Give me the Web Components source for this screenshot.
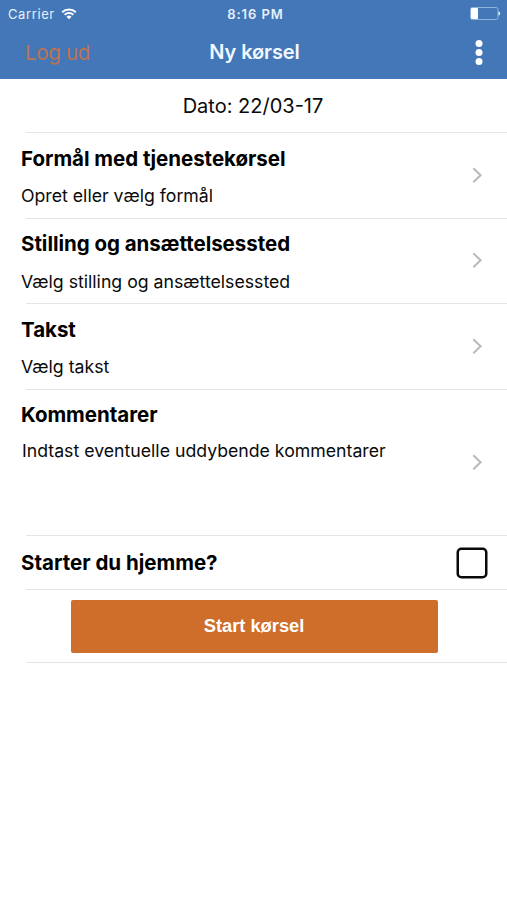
<!DOCTYPE html>
<html lang="da">
<head>
<meta charset="utf-8">
<meta name="viewport" content="width=device-width, initial-scale=1">
<title>Ny kørsel</title>
<style>
  html, body {
    margin: 0;
    background: #fff;
  }

  body {
    min-height: 900px;
    font-family: Inter, "Liberation Sans", sans-serif;
    color: #0a0a0a;
  }
</style>
</head>
<body>
<driving-screen></driving-screen>

<script>
/**
 * StatusBar - carrier, clock and battery
 */
class StatusBar extends HTMLElement {
  constructor() {
    super();
    this.attachShadow({ mode: 'open' });
    this.shadowRoot.innerHTML = `
      <style>
        :host {
          display: grid;
          grid-template-columns: 1fr auto 1fr;
          align-items: center;
          height: 27px;
          padding: 0 6px 0 8px;
          font-size: 13px;
          color: #e6f0fb;
        }

        svg { display: block; }

        .carrier {
          display: flex;
          align-items: center;
          gap: 6px;
          letter-spacing: 0.6px;
        }

        .time {
          padding-left: 2px;
          font-weight: 600;
          letter-spacing: 0.95px;
        }

        .battery { justify-self: end; }
      </style>
      <div class="carrier">
        <span>${this.getAttribute('carrier')}</span>
        <svg width="16" height="12" viewBox="0 0 16 12" fill="none" stroke="#fff" stroke-width="2">
          <path d="M1.2 4.2a9.7 9.7 0 0 1 13.6 0M3.7 6.8a6.2 6.2 0 0 1 8.6 0"/>
          <path d="M8 11.2 5.5 8.7a3.6 3.6 0 0 1 5 0z" fill="#fff" stroke="none"/>
        </svg>
      </div>
      <div class="time">${this.getAttribute('time')}</div>
      <svg class="battery" width="31" height="13" viewBox="0 0 31 13">
        <rect x="0.5" y="0.5" width="27.5" height="12" rx="1.8" fill="none" stroke="#8fb4dd"/>
        <rect x="1" y="1" width="7" height="11" rx="0.8" fill="#fff"/>
        <path d="M28.5 4.5c2 .5 2 3.5 0 4z" fill="#fff"/>
      </svg>
    `;
  }
}

/**
 * NavBar - back action, title and overflow menu
 */
class NavBar extends HTMLElement {
  constructor() {
    super();
    this.attachShadow({ mode: 'open' });
    this.shadowRoot.innerHTML = `
      <style>
        :host {
          display: grid;
          grid-template-columns: 1fr auto 1fr;
          align-items: center;
          height: 50px;
          padding: 0 23px 0 25px;
        }

        .action {
          font-size: 20.5px;
          letter-spacing: -0.3px;
          color: #bd7350;
        }

        .title {
          font-size: 20px;
          font-weight: 600;
          letter-spacing: -0.1px;
          color: #f2f8ff;
        }

        svg {
          display: block;
          justify-self: end;
        }
      </style>
      <div class="action"><slot name="action"></slot></div>
      <div class="title"><slot></slot></div>
      <svg width="10" height="27" viewBox="0 0 10 27" fill="#fff">
        <circle cx="5" cy="4.4" r="3.5"/>
        <circle cx="5" cy="13.5" r="3.5"/>
        <circle cx="5" cy="22.6" r="3.5"/>
      </svg>
    `;
  }
}

/**
 * FormRow - one table cell with an inset separator under it
 */
class FormRow extends HTMLElement {
  constructor() {
    super();
    this.attachShadow({ mode: 'open' });
    this.shadowRoot.innerHTML = `
      <style>
        :host {
          display: flex;
          flex-direction: column;
          height: var(--row-height, 86px);
        }

        .content {
          flex: 1;
          display: flex;
          align-items: center;
          justify-content: var(--row-justify, space-between);
          padding: 0 19px 0 21px;
        }

        .separator {
          height: 1px;
          margin-left: 26px;
          background: #e4e4e6;
        }
      </style>
      <div class="content"><slot></slot></div>
      <div class="separator"></div>
    `;
  }
}

/**
 * ChoiceRow - heading, current value and a disclosure chevron
 */
class ChoiceRow extends HTMLElement {
  constructor() {
    super();
    this.attachShadow({ mode: 'open' });
    this.shadowRoot.innerHTML = `
      <style>
        :host {
          flex: 1;
          align-self: stretch;
          display: flex;
          align-items: center;
          justify-content: space-between;
          padding-right: 5px;
        }

        .text {
          align-self: flex-start;
          padding-top: var(--heading-top, 12px);
        }

        .heading {
          font-size: 20.5px;
          line-height: 28px;
          font-weight: 700;
          letter-spacing: -0.03px;
          color: #000;
        }

        .value {
          margin-top: var(--value-gap, 11px);
          padding-left: var(--value-indent, 0);
          font-size: 17.7px;
          line-height: 24px;
        }

        svg { display: block; }
      </style>
      <div class="text">
        <div class="heading">${this.getAttribute('heading')}</div>
        <div class="value"><slot></slot></div>
      </div>
      <svg width="11" height="17" viewBox="0 0 11 17" fill="none" stroke="#b9b9bb" stroke-width="2">
        <path d="M1.3 1.3 8.6 8.3 1.3 15.3"/>
      </svg>
    `;
  }
}

/**
 * CheckBox - plain rounded box, ticked when checked is set
 */
class CheckBox extends HTMLElement {
  constructor() {
    super();
    this.attachShadow({ mode: 'open' });
    this.shadowRoot.innerHTML = `
      <style>
        :host { display: block; }

        svg { display: block; }
        .tick { display: none; }
        :host([checked]) .tick { display: inline; }
      </style>
      <svg width="32" height="32" viewBox="0 0 32 32" fill="none" stroke="#0a0a0a" stroke-width="2.5">
        <rect x="1.75" y="1.75" width="28.5" height="28.5" rx="3.5"/>
        <path class="tick" d="M8 16l6 6L24 10"/>
      </svg>
    `;
    this.addEventListener('click', () => this.toggleAttribute('checked'));
  }
}

/**
 * ActionButton - primary button
 */
class ActionButton extends HTMLElement {
  constructor() {
    super();
    this.attachShadow({ mode: 'open' });
    this.shadowRoot.innerHTML = `
      <style>
        :host { display: block; }

        button {
          display: block;
          width: 367px;
          height: 53px;
          padding: 0;
          border: 0;
          border-radius: 2px;
          background: #cf6d2b;
          color: #fff;
          font: bold 18.3px "Liberation Sans", Arial, sans-serif;
        }
      </style>
      <button type="button"><slot></slot></button>
    `;
  }
}

/**
 * DrivingScreen - the whole "new trip" form
 */
class DrivingScreen extends HTMLElement {
  constructor() {
    super();
    this.attachShadow({ mode: 'open' });
    this.shadowRoot.innerHTML = `
      <style>
        :host { display: block; }

        header {
          height: 79px;
          background: #4377b8;
        }

        .date {
          --row-height: 54px;
          --row-justify: center;
          font-size: 20px;
        }

        .date span { margin-right: 3px; }

        .position {
          --row-height: 85px;
          --heading-top: 11px;
          --value-gap: 12px;
        }

        .position choice-row,
        .comments choice-row {
          margin-bottom: 1px;
        }

        .comments {
          --row-height: 146px;
          --heading-top: 11px;
          --value-gap: 10px;
          --value-indent: 1px;
        }

        .home {
          --row-height: 54px;
          font-size: 20.5px;
          font-weight: 700;
          color: #000;
        }

        .start {
          --row-height: 73px;
          --row-justify: center;
        }

        .start action-button { margin-right: 1px; }
      </style>
      <header>
        <status-bar carrier="Carrier" time="8:16 PM"></status-bar>
        <nav-bar><span slot="action">Log ud</span>Ny kørsel</nav-bar>
      </header>
      <main>
        <form-row class="date"><span>Dato: 22/03-17</span></form-row>
        <form-row class="purpose">
          <choice-row heading="Formål med tjenestekørsel">Opret eller vælg formål</choice-row>
        </form-row>
        <form-row class="position">
          <choice-row heading="Stilling og ansættelsessted">Vælg stilling og ansættelsessted</choice-row>
        </form-row>
        <form-row class="rate">
          <choice-row heading="Takst">Vælg takst</choice-row>
        </form-row>
        <form-row class="comments">
          <choice-row heading="Kommentarer">Indtast eventuelle uddybende kommentarer</choice-row>
        </form-row>
        <form-row class="home">
          <span>Starter du hjemme?</span>
          <check-box></check-box>
        </form-row>
        <form-row class="start">
          <action-button>Start kørsel</action-button>
        </form-row>
      </main>
    `;
  }
}

customElements.define('status-bar', StatusBar);
customElements.define('nav-bar', NavBar);
customElements.define('form-row', FormRow);
customElements.define('choice-row', ChoiceRow);
customElements.define('check-box', CheckBox);
customElements.define('action-button', ActionButton);
customElements.define('driving-screen', DrivingScreen);
</script>
</body>
</html>
